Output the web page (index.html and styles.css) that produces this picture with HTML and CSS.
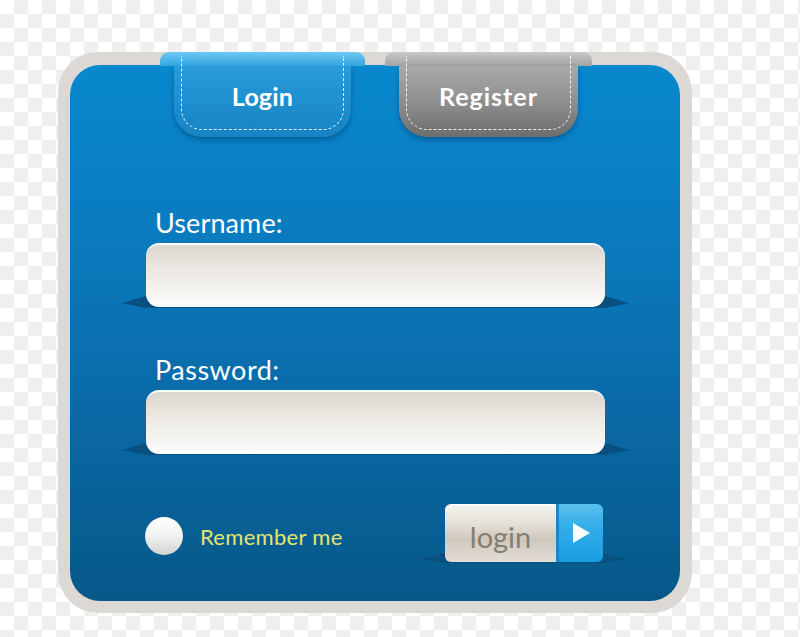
FILE: index.html
```html
<!DOCTYPE html>
<html>
<head>
<meta charset="utf-8">
<link rel="stylesheet" href="styles.css">
</head>
<body>
<div class="frame">
  <div class="panel">
    <div class="tabs">
      <div class="tab tab-login">
        <div class="tab-fold"></div>
        <div class="tab-body"><span>Login</span></div>
      </div>
      <div class="tab tab-register">
        <div class="tab-fold"></div>
        <div class="tab-body"><span>Register</span></div>
      </div>
    </div>
    <div class="form">
      <div class="label label-user">Username:</div>
      <div class="field"><div class="input"></div></div>
      <div class="label label-pass">Password:</div>
      <div class="field"><div class="input"></div></div>
      <div class="bottom-row">
        <div class="radio"></div>
        <div class="remember">Remember me</div>
        <div class="spacer"></div>
        <div class="button">
          <div class="btn-text">login</div>
          <div class="btn-arrow">
            <svg width="20" height="22" viewBox="0 0 20 22"><path d="M2 1 L19 11 L2 21 Z" fill="#ffffff"/></svg>
          </div>
        </div>
      </div>
    </div>
  </div>
</div>
</body>
</html>
```
FILE: styles.css
```css
html, body {
  margin: 0;
  padding: 0;
}
body {
  width: 800px;
  height: 637px;
  overflow: hidden;
  background-color: #ffffff;
  background-image: repeating-conic-gradient(#efefef 0 25%, #ffffff 0 50%);
  background-size: 28px 28px;
  font-family: Lato, "Open Sans", sans-serif;
  padding: 52px 0 0 58px;
  box-sizing: border-box;
}
.frame {
  width: 634px;
  height: 561px;
  box-sizing: border-box;
  padding: 13px 12px 12px 12px;
  background: #dcd8d3;
  border-radius: 40px;
}
.panel {
  height: 100%;
  border-radius: 30px;
  background: linear-gradient(180deg, #0888cd 0%, #0a7cc0 30%, #0a69a6 65%, #065888 100%);
  display: flex;
  flex-direction: column;
}
.tabs {
  display: flex;
  gap: 20px;
  margin: -13px 0 0 90px;
}
.tab {
  position: relative;
  width: 205px;
  height: 85px;
  display: flex;
  flex-direction: column;
}
.tab-register { width: 207px; }
.tab-fold {
  height: 14px;
  border-radius: 9px 9px 0 0;
}
.tab-body {
  flex: 1;
  margin: 0 14px;
  border-radius: 0 0 28px 28px;
  display: flex;
  align-items: center;
  justify-content: center;
  padding-bottom: 12px;
  box-shadow: 0 3px 5px rgba(0, 30, 70, 0.35);
}
.tab-body span {
  color: #ffffff;
  font-weight: 700;
  font-size: 25px;
  letter-spacing: 0.2px;
}
.tab::after {
  content: "";
  position: absolute;
  left: 21px;
  right: 21px;
  top: 4px;
  bottom: 7px;
  border: 1.5px dashed rgba(255, 255, 255, 0.9);
  border-top: none;
  border-radius: 0 0 21px 21px;
}
.tab-login .tab-fold {
  background: linear-gradient(180deg, #6cc9f3 0%, #34a6df 100%);
}
.tab-login .tab-body {
  background: linear-gradient(180deg, #2a9cd9 0%, #1e8fcf 50%, #1783c4 100%);
}
.tab-register .tab-fold {
  background: linear-gradient(180deg, #c9c9c9 0%, #a3a3a3 100%);
}
.tab-register .tab-body {
  background: linear-gradient(180deg, #a9a9a9 0%, #929292 45%, #6d6d6d 100%);
}
.tab-register .tab-body span { letter-spacing: 1px; }
.form {
  display: flex;
  flex-direction: column;
  padding-left: 76px;
  width: 459px;
}
.label {
  color: #ffffff;
  font-size: 27px;
  line-height: 32px;
  padding-left: 9px;
  margin-bottom: 4px;
  letter-spacing: 0.1px;
}
.label-pass { letter-spacing: 0.5px; }
.label-user { margin-top: 70px; }
.label-pass { margin-top: 47px; }
.field {
  position: relative;
  height: 64px;
}
.field::before {
  content: "";
  position: absolute;
  left: -24px;
  right: -24px;
  bottom: -1px;
  height: 12px;
  background: #08507f;
  clip-path: polygon(0 60%, 24px 0, calc(100% - 24px) 0, 100% 60%, calc(100% - 24px) 100%, 24px 100%);
}
.input {
  position: relative;
  height: 100%;
  box-sizing: border-box;
  border-radius: 13px;
  border-top: 2px solid #ffffff;
  background: linear-gradient(180deg, #dcd7cf 0%, #ebe8e3 40%, #fdfdfc 100%);
}
.bottom-row {
  margin-top: 50px;
  height: 58px;
  display: flex;
  align-items: center;
}
.radio {
  width: 38px;
  height: 38px;
  border-radius: 50%;
  margin: 6px 0 0 -1px;
  background: linear-gradient(180deg, #ffffff 0%, #f1f1f1 50%, #d2d2d2 100%);
}
.remember {
  margin: 6px 0 0 17px;
  color: #e3e66c;
  font-size: 22px;
  letter-spacing: 0.3px;
}
.spacer { flex: 1; }
.button {
  position: relative;
  width: 158px;
  height: 58px;
  margin-right: 2px;
  display: flex;
  border-radius: 6px;
}
.button::before {
  content: "";
  position: absolute;
  left: -24px;
  right: -24px;
  bottom: -1px;
  height: 10px;
  background: #08507f;
  clip-path: polygon(0 60%, 24px 0, calc(100% - 24px) 0, 100% 60%, calc(100% - 24px) 100%, 24px 100%);
}
.btn-text {
  position: relative;
  width: 111px;
  border-radius: 6px 0 0 6px;
  border-top: 1px solid #ffffff;
  box-sizing: border-box;
  background: linear-gradient(180deg, #f6f4f1 0%, #e3ded6 35%, #cfc8bd 60%, #e2ddd6 100%);
  color: #857f71;
  font-size: 29px;
  display: flex;
  align-items: center;
  justify-content: center;
  padding-top: 5px;
}
.btn-arrow {
  position: relative;
  width: 47px;
  border-left: 3px solid #1d86c6;
  box-sizing: border-box;
  border-radius: 0 6px 6px 0;
  background: linear-gradient(180deg, #5cc2ee 0%, #33acea 40%, #1a9ee2 100%);
  display: flex;
  align-items: center;
  justify-content: center;
}
```
